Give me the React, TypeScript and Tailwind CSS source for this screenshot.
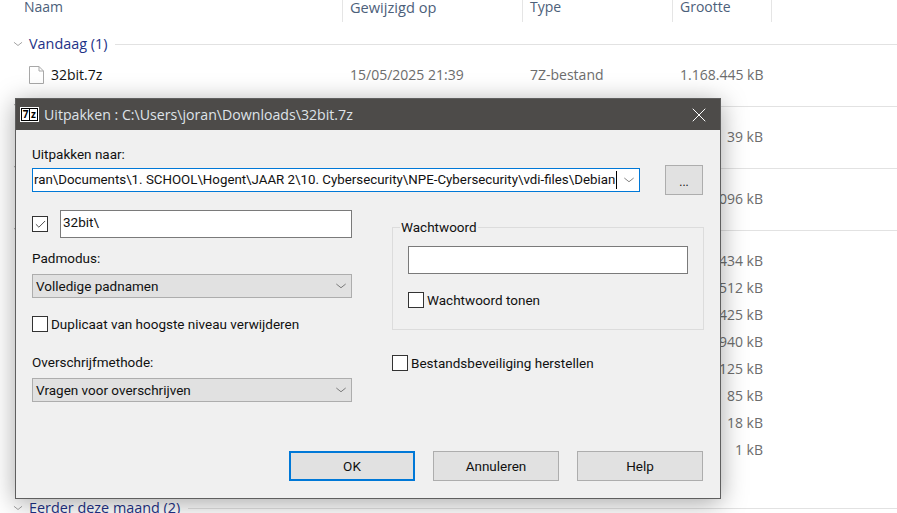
import { Check, ChevronDown, X } from 'lucide-react';

const font = "font-['Open_Sans','Noto_Sans',sans-serif]";
const dialogFont = "font-['Roboto','Noto_Sans',sans-serif]";

const Row = ({ name, date, type, size }: { name?: string; date?: string; type?: string; size: string }) => (
  <div className="flex h-[27px] items-center text-[14px] text-[#6d6d6d]">
    <div className="flex w-[350px] items-center pl-[29px]">
      {name && (
        <>
          <svg width="15" height="18" viewBox="0 0 15 18" className="shrink-0">
            <path d="M.5.5h9.5l4.5 4.500v12.5H.5z" fill="#fff" stroke="#a8a8a8" />
            <path d="M10 .5v4.500h4.500" fill="none" stroke="#a8a8a8" />
          </svg>
          <span className="ml-[7px] text-[#111]">{name}</span>
        </>
      )}
    </div>
    <div className="w-[180px]">{date}</div>
    <div className="w-[150px]">{type}</div>
    <div className="w-[83px] text-right whitespace-nowrap">{size}</div>
  </div>
);

const GroupHead = ({ label, className }: { label: string; className: string }) => (
  <div className={`flex items-center pl-3 ${className}`}>
    <ChevronDown size={12} strokeWidth={1.2} className="shrink-0 scale-x-125 text-[#777]" />
    <span className="ml-[5px] text-[14.4px] whitespace-nowrap text-[#1e3287]">{label}</span>
    <div className="ml-[8px] h-px flex-1 bg-[#e2e2e2]" />
  </div>
);

const Combo = ({ value }: { value: string }) => (
  <div className="flex h-6 items-center justify-between border border-[#adadad] bg-[#e1e1e1] pr-[3px] pl-[3px] text-[#111]">
    <span>{value}</span>
    <ChevronDown size={14} strokeWidth={1} className="scale-x-125 text-[#444]" />
  </div>
);

const Box = ({ checked, label }: { checked?: boolean; label?: string }) => (
  <div className="flex items-center">
    <div className="flex size-4 shrink-0 items-center justify-center border border-[#333] bg-white">
      {checked && <Check size={13} strokeWidth={1.75} className="text-[#444]" />}
    </div>
    {label && <span className="ml-[3px] whitespace-nowrap text-[#111]">{label}</span>}
  </div>
);

const Btn = ({ label, primary }: { label: string; primary?: boolean }) => (
  <div
    className={`flex h-[30px] w-[126px] items-center justify-center bg-[#e1e1e1] text-[#111] ${
      primary ? 'border-2 border-[#0078d7]' : 'border border-[#adadad]'
    }`}
  >
    {label}
  </div>
);

export default function App() {
  return (
    <div className={`relative h-[513px] w-[897px] overflow-hidden bg-white ${font}`}>
      {/* explorer list behind the dialog */}
      <div className="flex h-[22px] items-start text-[14px] text-[#4c607a]">
        <div className="h-[22px] w-[342px] pl-6 leading-[14px]">Naam</div>
        <div className="h-[22px] w-[180px] border-l border-[#e5e5e5] pl-[7px] text-[14.6px] leading-[14px]">Gewijzigd op</div>
        <div className="h-[22px] w-[150px] border-l border-[#e5e5e5] pl-[7px] leading-[14px]">Type</div>
        <div className="h-[22px] w-[100px] border-r border-l border-[#e5e5e5] pl-[7px] leading-[14px]">Grootte</div>
      </div>
      <GroupHead label="Vandaag (1)" className="mt-[8px] h-[28px]" />
      <div className="h-[3px]" />
      <Row name="32bit.7z" date="15/05/2025 21:39" type="7Z-bestand" size="1.168.445 kB" />
      <GroupHead label="Gisteren (1)" className="mt-[4px] h-[28px]" />
      <div className="h-[3px]" />
      <Row size="39 kB" />
      <GroupHead label="Eerder deze week" className="mt-[4px] h-[28px]" />
      <div className="h-[3px]" />
      <Row size="5.096 kB" />
      <GroupHead label="Vorige week" className="mt-[4px] h-[28px]" />
      <div className="h-[3px]" />
      <Row size="10.434 kB" />
      <Row size="2.512 kB" />
      <Row size="6.425 kB" />
      <Row size="1.940 kB" />
      <Row size="3.125 kB" />
      <Row size="85 kB" />
      <Row size="18 kB" />
      <Row size="1 kB" />
      <GroupHead label="Eerder deze maand (2)" className="mt-[31px] h-[28px]" />

      {/* 7-Zip extract dialog */}
      <div className="absolute top-[98px] left-[15px] flex h-[401px] w-[706px] flex-col border border-[#5f5f5f] bg-[#f0f0f0] shadow-[0_4px_24px_rgba(0,0,0,0.35)]">
        <div className="flex h-[31px] shrink-0 items-center bg-[#4d4b49] pl-[4px] text-[14.15px] text-[#dfe3e8]">
          <div className="flex h-[15px] w-[19px] items-center justify-center gap-px border border-white bg-black">
            <span className="flex h-[11px] w-[7px] items-center justify-center bg-white text-[10px] leading-[11px] font-bold text-black">7</span>
            <span className="flex h-[11px] w-[7px] items-center justify-center bg-white text-[10px] leading-[11px] font-bold text-black">z</span>
          </div>
          <span className="ml-[5px]">Uitpakken : C:\Users\joran\Downloads\32bit.7z</span>
          <X size={24} strokeWidth={1} className="mr-[9px] ml-auto text-white" />
        </div>

        <div className={`flex flex-1 flex-col pt-[14px] pr-[17px] pl-4 text-[13.5px] text-[#111] ${dialogFont}`}>
          <div className="h-[21px] leading-5">Uitpakken naar:</div>
          <div className="flex items-center">
            <div className="flex h-[24px] w-[608px] items-center justify-between border border-[#0078d7] bg-white pr-[3px] pl-px">
              <span className="border-r border-black pr-px text-[13.3px] leading-[18px] whitespace-nowrap">
                ran\Documents\1. SCHOOL\Hogent\JAAR 2\10. Cybersecurity\NPE-Cybersecurity\vdi-files\Debian
              </span>
              <ChevronDown size={14} strokeWidth={1} className="scale-x-125 text-[#444]" />
            </div>
            <div className="ml-[25px] flex h-[30px] w-[38px] items-center justify-center border border-[#adadad] bg-[#e1e1e1] pt-1 text-[12px]">...</div>
          </div>

          <div className="flex">
            <div className="w-[320px] shrink-0">
              <div className="mt-[15px] flex items-center">
                <Box checked />
                <div className="ml-3 h-[28px] w-[292px] border border-[#7a7a7a] bg-white pt-px pl-[2px] leading-5">32bit\</div>
              </div>
              <div className="mt-[10px] h-[20px] leading-5">Padmodus:</div>
              <div className="mt-[6px]">
                <Combo value="Volledige padnamen" />
              </div>
              <div className="mt-[16px]">
                <Box label="Duplicaat van hoogste niveau verwijderen" />
              </div>
              <div className="mt-[18px] h-[20px] leading-5">Overschrijfmethode:</div>
              <div className="mt-[6px]">
                <Combo value="Vragen voor overschrijven" />
              </div>
            </div>

            <div className="ml-10 flex-1">
              <div className="relative mt-[32px] h-[103px] border border-[#dcdcdc] px-[15px] pt-[18px]">
                <span className="absolute -top-[11px] left-[7px] bg-[#f0f0f0] px-px leading-5">Wachtwoord</span>
                <div className="h-[28px] w-[280px] border border-[#7a7a7a] bg-white" />
                <div className="mt-[16px]">
                  <Box label="Wachtwoord tonen" />
                </div>
              </div>
              <div className="mt-[23px]">
                <Box label="Bestandsbeveiliging herstellen" />
              </div>
            </div>
          </div>

          <div className="mt-[49px] flex justify-end gap-[18px]">
            <Btn label="OK" primary />
            <Btn label="Annuleren" />
            <Btn label="Help" />
          </div>
        </div>
      </div>
    </div>
  );
}
